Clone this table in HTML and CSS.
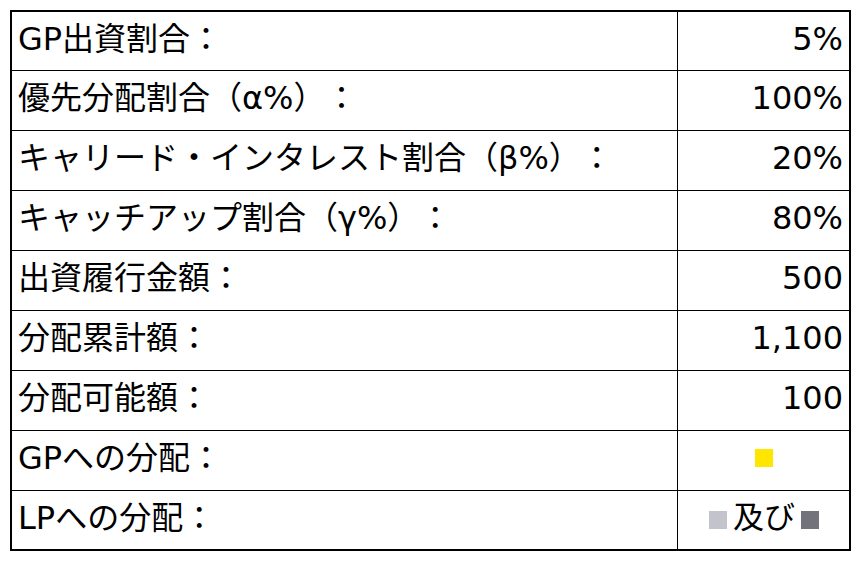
FILE: index.html
```html
<!DOCTYPE html>
<html lang="ja">
<head>
<meta charset="utf-8">
<link rel="stylesheet" href="styles.css">
</head>
<body>
<div class="table">
  <div class="row first"><div class="label">GP出資割合：</div><div class="value">5%</div></div>
  <div class="row"><div class="label">優先分配割合（α%）：</div><div class="value">100%</div></div>
  <div class="row"><div class="label">キャリード・インタレスト割合（β%）：</div><div class="value">20%</div></div>
  <div class="row"><div class="label">キャッチアップ割合（γ%）：</div><div class="value">80%</div></div>
  <div class="row"><div class="label">出資履行金額：</div><div class="value">500</div></div>
  <div class="row"><div class="label">分配累計額：</div><div class="value">1,100</div></div>
  <div class="row"><div class="label">分配可能額：</div><div class="value">100</div></div>
  <div class="row"><div class="label">GPへの分配：</div><div class="value center"><span class="sq yellow"></span></div></div>
  <div class="row last"><div class="label">LPへの分配：</div><div class="value center"><span class="sq light"></span><span class="and">及び</span><span class="sq dark"></span></div></div>
</div>
</body>
</html>
```
FILE: styles.css
```css
html, body {
  margin: 0;
  padding: 0;
  background: #ffffff;
}
body {
  padding: 10px;
  font-family: "DejaVu Sans", "Noto Sans CJK JP", sans-serif;
  color: #000;
  text-spacing-trim: space-all;
}
.table {
  width: 841px;
  box-sizing: border-box;
  border: 2px solid #000;
  display: flex;
  flex-direction: column;
}
.row {
  display: grid;
  grid-template-columns: 666px 170px;
  height: 60px;
  border-top: 1px solid #000;
  box-sizing: border-box;
}
.row.first {
  border-top: none;
  height: 58px;
}
.row.last {
  height: 59px;
}
.label, .value {
  display: flex;
  align-items: center;
  font-size: 32px;
  line-height: 1;
  white-space: nowrap;
  padding-bottom: 5px;
  box-sizing: border-box;
}
.label {
  padding-left: 6px;
  border-right: 1px solid #000;
}
.value {
  justify-content: flex-end;
  padding-right: 5px;
}
.value.center {
  justify-content: center;
  padding-right: 0;
  padding-left: 2px;
}
.sq {
  display: inline-block;
  width: 18px;
  height: 18px;
  margin-top: 4px;
}
.value.center .sq.yellow {
  margin-top: 0;
}
.yellow { background: #ffe600; }
.light { background: #c3c3cb; }
.dark { background: #73737b; }
.and {
  margin: 0 6px;
  font-size: 31px;
}
```
